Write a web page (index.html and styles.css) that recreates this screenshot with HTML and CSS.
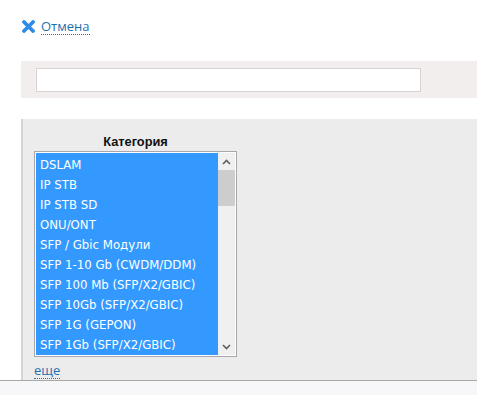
FILE: index.html
```html
<!DOCTYPE html>
<html lang="ru">
  <head>
    <meta charset="UTF-8" />
    <title>Фильтр</title>
    <link rel="stylesheet" href="styles.css">
  </head>
  <body>
    <div class="cancel-row">
      <a class="cancel-link" href="#">
        <svg class="cancel-icon" width="13" height="13" viewBox="0 0 13 13">
          <path d="M2 2 L11 11 M11 2 L2 11" stroke="#2f8be6" stroke-width="3.8" stroke-linecap="round" />
        </svg>
        <span class="dotted">Отмена</span>
      </a>
    </div>

    <div class="search-bar">
      <input type="text" class="search-input" />
    </div>

    <div class="filter-panel">
      <div class="filter-group">
        <div class="filter-title">Категория</div>
        <div class="listbox">
          <ul class="options">
            <li>DSLAM</li>
            <li>IP STB</li>
            <li>IP STB SD</li>
            <li>ONU/ONT</li>
            <li>SFP / Gbic Модули</li>
            <li>SFP 1-10 Gb (CWDM/DDM)</li>
            <li>SFP 100 Mb (SFP/X2/GBIC)</li>
            <li>SFP 10Gb (SFP/X2/GBIC)</li>
            <li>SFP 1G (GEPON)</li>
            <li>SFP 1Gb (SFP/X2/GBIC)</li>
          </ul>
          <div class="scrollbar">
            <div class="arrow">
              <svg width="9" height="6" viewBox="0 0 9 6"><path d="M1 5 L4.5 1.5 L8 5" fill="none" stroke="#5f5f5f" stroke-width="1.6" /></svg>
            </div>
            <div class="track">
              <div class="thumb"></div>
            </div>
            <div class="arrow">
              <svg width="9" height="6" viewBox="0 0 9 6"><path d="M1 1 L4.5 4.5 L8 1" fill="none" stroke="#5f5f5f" stroke-width="1.6" /></svg>
            </div>
          </div>
        </div>
      </div>
      <a class="more-link dotted" href="#">еще</a>
    </div>

    <div class="footer"></div>
  </body>
</html>
```

FILE: styles.css
```css
/* General */
body {
  margin: 0;
  font-family: "DejaVu Sans", Verdana, sans-serif;
  font-size: 12px;
  background: white;
  overflow: hidden;
}

a {
  color: #1f6fae;
  text-decoration: none;
}

.dotted {
  border-bottom: 1px dotted #1f6fae;
}

/* Cancel link */
.cancel-row {
  padding: 18px 0 0 22px;
  height: 43px;
}

.cancel-link {
  display: inline-flex;
  align-items: center;
  gap: 6px;
  font-family: "Open Sans", "DejaVu Sans", sans-serif;
  font-size: 13px;
  line-height: 16px;
}

.cancel-icon {
  display: block;
}

/* Search bar */
.search-bar {
  margin-left: 21px;
  background: #f2eeed;
  padding: 7px 0 6px 15px;
  height: 24px;
}

.search-input {
  box-sizing: border-box;
  width: 385px;
  height: 24px;
  margin: 0;
  border: 1px solid #d9d1d3;
  background: white;
}

/* Filter panel */
.filter-panel {
  margin: 21px 0 0 21px;
  height: 261px;
  background: #ececec;
  border-left: 2px solid #d4d4d4;
  padding: 0 0 0 11px;
}

.filter-group {
  width: 203px;
  padding-top: 15px;
}

.filter-title {
  text-align: center;
  font-family: "Liberation Sans", Arial, sans-serif;
  font-weight: bold;
  font-size: 12.8px;
  line-height: 16px;
  color: #111;
  margin-bottom: 1px;
}

.listbox {
  display: flex;
  height: 206px;
  border: 1px solid #a9a6ad;
  background: white;
  padding: 1px;
  box-sizing: border-box;
}

.options {
  flex: 1;
  list-style: none;
  margin: 0;
  padding: 0;
  overflow: hidden;
  background: #3399ff;
}

.options li {
  box-sizing: border-box;
  height: 20px;
  padding: 4px 0 0 4px;
  line-height: 16px;
  font-size: 11.75px;
  color: white;
  white-space: nowrap;
}

.scrollbar {
  width: 17px;
  display: flex;
  flex-direction: column;
  background: #f0f0f0;
}

.arrow {
  height: 17px;
  display: flex;
  align-items: center;
  justify-content: center;
}

.track {
  flex: 1;
}

.thumb {
  height: 36px;
  background: #cdcdcd;
}

.more-link {
  display: inline-block;
  margin-top: 5px;
  font-family: "Open Sans", "DejaVu Sans", sans-serif;
  font-size: 13px;
  line-height: 16px;
}

/* Footer */
.footer {
  border-top: 1px solid #a8a8a8;
  background: #f7f7f9;
  height: 20px;
}
```
